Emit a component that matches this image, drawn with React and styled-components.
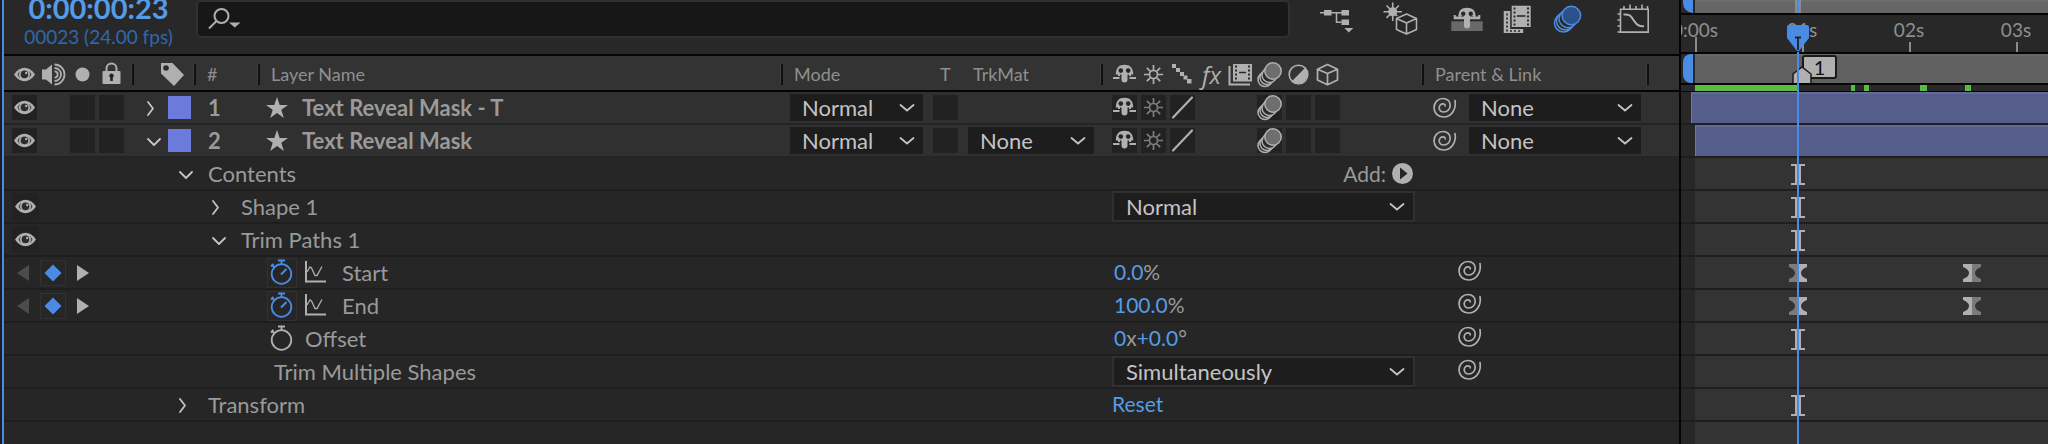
import React from "react";
import styled, { createGlobalStyle, css } from "styled-components";

const c = {
  panel: "#262626",
  toolbar: "#282828",
  header: "#333333",
  layer: "#303030",
  well: "#222222",
  field: "#1d1d1d",
  line: "#1e1e1e",
  icon: "#b0b0b0",
  text: "#9a9a9a",
  bright: "#c4c4c4",
  blue: "#4a8be5",
  value: "#559be8",
  green: "#5cbb44",
};

const ZERO = 14;
const SECOND = 107;
const NOW = 117;

const Global = createGlobalStyle`
  *, *::before, *::after { box-sizing: border-box; }
  body { margin: 0; background: ${c.panel}; font-family: Lato, "Open Sans", sans-serif; color: ${c.text}; overflow: hidden; }
  button, input, select { font: inherit; color: inherit; margin: 0; }
  svg { display: block; flex: none; overflow: visible; }
`;

const Page = styled.main`
  display: grid;
  grid-template-columns: minmax(1300px, 1679px) minmax(300px, 1fr);
  min-height: 100vh;
`;

const LayerPanel = styled.section`
  border-left: 2px solid ${c.blue};
  box-shadow: -2px 0 0 #1c1c1c;
  margin-left: 2px;
  background: ${c.panel};
`;

/* Toolbar */
const Toolbar = styled.div`
  display: flex;
  height: 56px;
  background: ${c.toolbar};
  border-bottom: 2px solid #050505;
`;

const Timecode = styled.div`
  flex: 0 0 189px;
  display: flex;
  flex-direction: column;
  align-items: center;
  gap: 9px;
  white-space: nowrap;
`;

const CurrentTime = styled.button`
  border: 0;
  padding: 0;
  background: none;
  font-size: 29px;
  font-weight: 700;
  line-height: 16px;
  color: ${c.value};
`;

const FrameInfo = styled.span`
  font-size: 19px;
  line-height: 24px;
  color: #2f68ad;
`;

const Search = styled.label`
  flex: 1;
  display: flex;
  align-items: center;
  gap: 8px;
  height: 38px;
  margin-left: 3px;
  padding-left: 10px;
  background: #171717;
  border: 2px solid #303030;
  border-radius: 5px;
`;

const SearchInput = styled.input`
  flex: 1;
  min-width: 0;
  height: 28px;
  border: 0;
  outline: 0;
  background: transparent;
  font-size: 19px;
`;

const ToolGroups = styled.div`
  display: flex;
  gap: 32px;
  padding: 3px 29px 0 28px;
`;

const ToolGroup = styled.div`
  display: flex;
  gap: 16px;
`;

const IconButton = styled.button`
  display: flex;
  align-items: center;
  justify-content: center;
  flex: none;
  width: ${(p) => p.$w || 25}px;
  height: ${(p) => p.$h || p.$w || 25}px;
  padding: 0;
  border: ${(p) => (p.$framed ? "1px solid #313131" : "0")};
  background: ${(p) => (p.$well ? c.well : "transparent")};
`;

/* Column grid shared by the header and the layer rows */
const columns = css`
  display: grid;
  grid-template-columns: 130px 62px 64px minmax(0, 1fr) 320px 321px 225px 30px;
`;

const HeaderRow = styled.div`
  ${columns}
  height: 36px;
  padding-top: 2px;
  background: ${c.header};
  border-bottom: 2px solid #050505;
  font-size: 18px;
  color: #8f8f8f;
`;

const HeaderCell = styled.div`
  display: flex;
  align-items: center;
  gap: ${(p) => p.$gap || 0}px;
  padding-left: ${(p) => p.$pad || 0}px;
  white-space: nowrap;
  &::after {
    content: "";
    width: 2px;
    height: 21px;
    margin-left: auto;
    background: #0f0f0f;
    box-shadow: -1px 0 0 #3d3d3d;
  }
`;

const HeaderLabel = styled.span`
  width: ${(p) => (p.$w ? p.$w + "px" : "auto")};
`;

const LayerRow = styled.div`
  ${columns}
  height: 33px;
  background: ${c.layer};
  border-bottom: 2px solid #242424;
  font-size: 22px;
  font-weight: 700;
`;

const Cell = styled.div`
  display: flex;
  align-items: center;
  gap: ${(p) => p.$gap || 0}px;
  padding-left: ${(p) => p.$pad || 0}px;
  white-space: nowrap;
`;

const Well = styled.span`
  flex: none;
  width: 25px;
  height: 25px;
  background: ${(p) => (p.$empty ? "transparent" : c.well)};
`;

const Swatch = styled.button`
  width: 23px;
  height: 23px;
  padding: 0;
  border: 0;
  background: #6b7adb;
`;

const SelectBox = styled.div`
  display: grid;
  align-items: center;
  justify-items: end;
  width: ${(p) => p.$w}px;
  height: ${(p) => (p.$framed ? 31 : 27)}px;
  background: ${c.field};
  border: ${(p) => (p.$framed ? "2px solid #303030" : "0")};
  color: ${c.bright};
  font-size: 22px;
  font-weight: 400;
  & > * { grid-area: 1 / 1; }
  & > svg { margin-right: 8px; pointer-events: none; }
`;

const NativeSelect = styled.select`
  appearance: none;
  width: 100%;
  height: 27px;
  padding: 0 28px 0 12px;
  border: 0;
  background: transparent;
  line-height: 27px;
`;

/* Property rows */
const PropertyRow = styled.div`
  display: grid;
  grid-template-columns: 130px minmax(0, 1fr) 321px 255px;
  height: 33px;
  border-bottom: 2px solid ${c.line};
  font-size: 22px;
`;

const ValueCell = styled(Cell)`
  padding-bottom: ${(p) => (p.$raised ? 3 : 0)}px;
  font-size: 21px;
`;

const ValueButton = styled.button`
  padding: 0;
  border: 0;
  background: none;
  color: ${c.value};
`;

const AddButton = styled.button`
  display: flex;
  align-items: center;
  gap: 6px;
  margin-left: auto;
  margin-right: 11px;
  padding: 0;
  border: 0;
  background: none;
`;

/* Timeline */
const Timeline = styled.section`
  display: flex;
  flex-direction: column;
  position: relative;
  overflow: hidden;
  border-left: 2px solid #050505;
  background: ${c.toolbar};
`;

const Track = styled.div`
  position: relative;
  height: ${(p) => p.$h}px;
  padding-left: ${ZERO}px;
  border-bottom: ${(p) => p.$line || 2}px solid #050505;
`;

const Bar = styled.div`
  height: 100%;
  background: ${(p) => p.$color};
  box-shadow: inset 0 2px 0 rgba(255, 255, 255, 0.05);
`;

const Handle = styled.span`
  position: absolute;
  top: 0;
  bottom: 0;
  left: 2px;
  width: 10px;
  background: ${c.blue};
  border-radius: ${(p) => (p.$low ? "0 0 0 10px" : "8px 0 0 8px")};
`;

const NavigatorMark = styled.span`
  position: absolute;
  top: 0;
  bottom: 0;
  left: ${NOW - 3}px;
  width: 6px;
  background: ${c.blue};
  border: solid #8b8b8b;
  border-width: 0 2px;
`;

const Tick = styled.span`
  position: absolute;
  bottom: 0;
  width: 2px;
  height: ${(p) => (p.$tall ? 15 : 10)}px;
  background: #8a8a8a;
`;

const TickLabel = styled.span`
  position: absolute;
  top: 5px;
  transform: translateX(-50%);
  font-size: 19px;
  line-height: 20px;
  color: #8f8f8f;
`;

const Cached = styled.span`
  position: absolute;
  top: 0;
  bottom: 0;
  background: ${c.green};
`;

const Marker = styled.div`
  position: absolute;
  top: 1px;
  left: 121px;
  width: 35px;
  height: 24px;
  border: 2px solid #1a1a1a;
  border-radius: 3px;
  background: #b0b0b0;
  color: #111;
  font-size: 20px;
  line-height: 20px;
  text-align: center;
`;

const MarkerPin = styled.svg`
  position: absolute;
  left: 111px;
  bottom: 0;
`;

const TrackRow = styled.div`
  position: relative;
  height: 33px;
  padding-left: ${(p) => (p.$start === undefined ? ZERO : p.$start)}px;
  border-bottom: 2px solid ${c.line};
`;

const LayerBar = styled.div`
  height: 100%;
  background: #555d8b;
  border-top: 2px solid #62699a;
  border-left: 1px solid #6f77a8;
`;

const Lane = styled.div`
  height: 100%;
  background: #333333;
`;

const Filler = styled.div`
  flex: 1;
  display: grid;
  padding-left: ${ZERO}px;
`;

const KeySvg = styled.svg`
  position: absolute;
  top: 6px;
  transform: translateX(-50%);
`;

const PlayheadLine = styled.span`
  position: absolute;
  top: 52px;
  bottom: 0;
  left: ${NOW - 1}px;
  width: 2px;
  background: ${c.blue};
`;

const PlayheadGrip = styled.svg`
  position: absolute;
  top: 25px;
  left: ${NOW - 11}px;
`;

/* Icons */
const Eye = () => (
  <svg width="21" height="15" viewBox="0 0 21 15">
    <path d="M0 7.500C3 3 6.500.7 10.500.7S18 3 21 7.500C18 12 14.500 14.300 10.500 14.300S3 12 0 7.500z" fill={c.icon} />
    <path d="M3.500 7.500C4.300 5.800 5.300 4.600 6.300 4A5.800 5.800 0 0 0 6.300 11C5.300 10.400 4.300 9.200 3.500 7.500zM17.500 7.500C16.700 5.800 15.700 4.600 14.700 4A5.800 5.800 0 0 1 14.700 11C15.700 10.400 16.700 9.200 17.500 7.500z" fill="#4a4a4a" />
    <circle cx="10.500" cy="7.400" r="3.800" fill="#2c2c2c" />
    <circle cx="12.200" cy="6" r="1.200" fill={c.icon} />
  </svg>
);

const Speaker = () => (
  <svg width="25" height="25" viewBox="0 0 25 25" fill="none" stroke={c.icon} strokeWidth="1.800">
    <path d="M1 7.500h4l6-5v20l-6-5H1z" fill={c.icon} stroke="none" />
    <path d="M13.500 9.300a3.200 3.200 0 0 1 0 6.400M13.500 6a6.500 6.500 0 0 1 0 13M13.500 2.500a10 10 0 0 1 0 20" />
  </svg>
);

const Dot = () => (
  <svg width="25" height="25" viewBox="0 0 25 25"><circle cx="12.500" cy="12.500" r="7" fill={c.icon} /></svg>
);

const Lock = () => (
  <svg width="25" height="25" viewBox="0 0 25 25">
    <path d="M7.500 10V6.500a5 5 0 0 1 10 0V10" fill="none" stroke={c.icon} strokeWidth="2" />
    <rect x="3.500" y="9" width="18" height="13" rx="1" fill={c.icon} />
    <path d="M12.500 11.500a2.200 2.200 0 0 1 1.300 4V19h-2.600v-3.500A2.200 2.200 0 0 1 12.500 11.500z" fill="#222" />
  </svg>
);

const Tag = () => (
  <svg width="23" height="23" viewBox="0 0 23 23">
    <path d="M0 0h11.500L23 12 13 23 0 10.500z" fill={c.icon} />
    <circle cx="5" cy="5" r="2.800" fill="#2c2c2c" />
  </svg>
);

const Shy = () => (
  <svg width="25" height="25" viewBox="0 0 25 25" fill={c.icon}>
    <path d="M3.800 12.500C3.800 6 7 2.800 12.500 2.800S21.200 6 21.200 12.500z" />
    <path d="M9.500 12h6v5.500a3 3 0 0 1-6 0zM1 15h6.500v2H1zM17.500 15H24v2h-6.500z" />
    <path d="M6 12h2v2H6zM17 12h2v2h-2z" />
    <circle cx="8.800" cy="8.600" r="2.300" fill="#252525" />
    <circle cx="16.200" cy="8.600" r="2.300" fill="#252525" />
  </svg>
);

const Sun = ({ dim }) => (
  <svg width="25" height="25" viewBox="0 0 25 25" fill="none" stroke={dim ? "#7c7c7c" : c.icon} strokeWidth="1.700">
    <circle cx="12.500" cy="12.500" r="4" />
    <path d="M12.500 3v5M12.500 17v5M3 12.500h5M17 12.500h5M5.800 5.800l3.400 3.400M15.800 15.800l3.400 3.400M19.200 5.800l-3.400 3.400M9.200 15.800l-3.400 3.400" />
  </svg>
);

const Stairs = () => (
  <svg width="25" height="25" viewBox="0 0 25 25" fill={c.icon}>
    <path d="M2 2h4v4H2zM6 6h4v4H6zM10 10h4v4h-4zM13.500 13.500h4v4h-4zM17 17h4.500v4.500H17z" />
  </svg>
);

const Slash = () => (
  <svg width="25" height="25" viewBox="0 0 25 25" fill="none" stroke={c.icon} strokeWidth="2.200" strokeLinecap="round">
    <path d="M3 22.500L22 2.500" />
  </svg>
);

const FxMark = styled.span`
  width: 25px;
  font-family: "Open Sans", sans-serif;
  font-style: italic;
  font-size: 24px;
  line-height: 25px;
  text-align: center;
  color: ${c.icon};
`;

const FrameBlend = () => (
  <svg width="25" height="25" viewBox="0 0 25 25">
    <path d="M1.500 4v18.500H22" fill="none" stroke={c.icon} strokeWidth="2" />
    <rect x="5" y="2" width="19" height="17.500" fill={c.icon} />
    <path d="M8 3.500v15M21 3.500v15" stroke="#2a2a2a" strokeWidth="2" strokeDasharray="2 2" />
    <path d="M11 10.500h7" stroke="#2a2a2a" strokeWidth="1.500" />
  </svg>
);

const MotionBlur = () => (
  <svg width="25" height="25" viewBox="0 0 25 25" stroke={c.icon} strokeWidth="1.500" fill="#2b2b2b">
    <circle cx="8" cy="17.500" r="7" />
    <circle cx="10" cy="15.500" r="7" />
    <circle cx="12.500" cy="13" r="7.500" />
    <circle cx="16" cy="9" r="8.200" fill="#6e6e6e" />
  </svg>
);

const Adjust = () => (
  <svg width="25" height="25" viewBox="0 0 25 25">
    <circle cx="12.500" cy="12.500" r="9.300" fill="none" stroke={c.icon} strokeWidth="1.600" />
    <path d="M19.200 5.800A9.500 9.500 0 0 1 5.800 19.200z" fill={c.icon} />
  </svg>
);

const Cube = () => (
  <svg width="25" height="25" viewBox="0 0 25 25" fill="none" stroke={c.icon} strokeWidth="1.700" strokeLinejoin="round">
    <path d="M12.500 2.500l10 4.700v10.800l-10 4.800-10-4.800V7.200zM2.500 7.200l10 4.300 10-4.300M12.500 11.500v11.300" />
  </svg>
);

const Spiral = () => (
  <svg width="24" height="22" viewBox="0 0 24 22" fill="none" stroke={c.icon} strokeWidth="1.700" strokeLinecap="round">
    <path d="M22 3.500C23.500 12 18.500 20 10.500 20 5 20 1 15.800 1 10.800 1 5.500 5 1.500 10 1.500c4.300 0 7.200 3 7.200 6.700 0 3.800-2.700 6.800-6.400 6.800-2.700 0-4.600-1.800-4.600-4.200 0-2.200 1.600-4 3.700-4 1.500 0 2.400.9 2.300 2.100" />
  </svg>
);

const Star = () => (
  <svg width="22" height="22" viewBox="0 0 22 22" fill={c.icon}>
    <path d="M11 0l2.700 8H22l-6.700 4.800L17.800 21 11 16l-6.800 5 2.500-8.200L0 8h8.300z" />
  </svg>
);

const Chevron = ({ open }) => (
  <svg width="16" height="16" viewBox="0 0 16 16" fill="none" stroke={c.bright} strokeWidth="1.800" strokeLinecap="round" strokeLinejoin="round">
    <path d={open ? "M2 6l6 6 6-6" : "M2 2l5 6.500L2 15"} />
  </svg>
);

const DownMark = () => (
  <svg width="16" height="8" viewBox="0 0 16 8" fill="none" stroke={c.bright} strokeWidth="1.800" strokeLinecap="round">
    <path d="M1.500 1L8 6.500 14.500 1" />
  </svg>
);

const Stopwatch = ({ on }) => (
  <svg width="24" height="28" viewBox="0 0 24 28" fill="none" stroke={on ? c.blue : c.icon} strokeWidth="1.800">
    <circle cx="11.500" cy="15" r="9.800" />
    <path d="M8 1.500h7M11.500 1.500V5M1.500 5.500l3 3M1 7.500l2.500-2.500" />
    {on && <path d="M11 15.500l5.500-5.500" strokeWidth="2" />}
  </svg>
);

const GraphSmall = () => (
  <svg width="22" height="24" viewBox="0 0 22 24" fill="none" stroke={c.icon}>
    <path d="M1 0v20.500h20" strokeWidth="2" />
    <path d="M2 11l3-5 1.500 1 3.500 7.500h2l5-9" strokeWidth="1.300" />
  </svg>
);

const KeyArrow = ({ back }) => (
  <svg width="12" height="16" viewBox="0 0 12 16">
    <path d={back ? "M12 0v16L0 8z" : "M0 0v16l12-8z"} fill={back ? "#4c4c4c" : c.icon} />
  </svg>
);

const Diamond = () => (
  <svg width="18" height="18" viewBox="0 0 18 18"><path d="M9 .5L17.500 9 9 17.500.5 9z" fill={c.blue} /></svg>
);

const AddMark = () => (
  <svg width="21" height="21" viewBox="0 0 21 21">
    <circle cx="10.500" cy="10.500" r="10.500" fill={c.icon} />
    <path d="M8 4.500v12l7.500-6z" fill="#262626" />
  </svg>
);

const Magnifier = () => (
  <svg width="34" height="22" viewBox="0 0 34 22" fill="none" stroke={c.icon} strokeWidth="2">
    <circle cx="13.500" cy="8" r="7" />
    <path d="M8.500 13L1 20.500" />
    <path d="M21 14.500h11.500L26.800 19.500z" fill={c.icon} stroke="none" />
  </svg>
);

const Tool = ({ children }) => (
  <svg width="34" height="34" viewBox="0 0 34 34" fill={c.icon}>{children}</svg>
);

const FlowIcon = () => (
  <Tool>
    <path d="M6 7h7.500v5.500H6zM23.500 7H31v5.500h-7.500zM23.500 16.500H31V22h-7.500zM26.300 25h9l-4.500 4.500z" />
    <path d="M2 9.700h22M18.500 9.700v9.600h5" fill="none" stroke={c.icon} strokeWidth="1.500" />
  </Tool>
);

const DraftIcon = () => (
  <Tool>
    <circle cx="8.700" cy="8.700" r="4.500" />
    <g fill="none" stroke={c.icon} strokeWidth="1.600" strokeLinejoin="round">
      <path d="M8.700-.5v18.400M-.5 8.700h18.400M2.500 2.500l12.400 12.400M14.900 2.500L2.500 14.900" />
      <path d="M22.500 11l10 4.500v11l-10 4.500-10-4.500v-11z" fill={c.toolbar} stroke={c.toolbar} strokeWidth="4" />
      <path d="M22.500 11l10 4.500v11l-10 4.500-10-4.500v-11zM12.500 15.500l10 4.500 10-4.500M22.500 20v11" />
    </g>
  </Tool>
);

const ShyToolIcon = () => (
  <Tool>
    <path d="M1.300 18.300h31.400V28H1.300z" fill="#696969" />
    <path d="M8.500 13C8.500 7.500 11.500 4.700 17 4.700S25.500 7.500 25.500 13z" />
    <path d="M3.700 12h2v1.500h3V12h2v1.500h12.600V12h2v1.500h3V12h2v4.300H3.700z" />
    <path d="M14 13h6v9.500a3 3 0 0 1-6 0z" />
    <circle cx="13.200" cy="10.800" r="2.200" fill={c.toolbar} />
    <circle cx="20.800" cy="10.800" r="2.200" fill={c.toolbar} />
  </Tool>
);

const FilmIcon = () => (
  <Tool>
    <path d="M3.700 8h6.500v18h13v4H3.700z" />
    <path d="M7 10.500v18M10 28h12" stroke={c.toolbar} strokeWidth="1.700" strokeDasharray="2 2" />
    <path d="M11.700 2.700h19V24h-19z" />
    <path d="M14.500 4.500v18.500M28 4.500v18.500" stroke={c.toolbar} strokeWidth="2" strokeDasharray="2 2" />
    <path d="M17 13h8.500" stroke={c.toolbar} strokeWidth="1.600" />
  </Tool>
);

const BlurToolIcon = () => (
  <Tool>
    <g stroke={c.blue} strokeWidth="1.500" fill={c.toolbar}>
      <circle cx="13.500" cy="20" r="9" />
      <circle cx="15.500" cy="18" r="9" />
      <circle cx="18" cy="15.700" r="9" />
      <circle cx="21.300" cy="12.500" r="9.300" fill="#2c5189" />
    </g>
  </Tool>
);

const GraphEditorIcon = () => (
  <Tool>
    <g fill="none" stroke={c.icon} strokeWidth="1.600">
      <path d="M4.500 6.300h27.700v22.800H4.500zM8 6V3M14 6V1.500M20 6V3M26 6V1.500M31.500 6V3M4 11H1.500M4 17H1.500M4 23H1.500M4 29H1.500" />
      <path d="M7.500 11.500c7-.5 7.500 2 10 5.500s4 6.500 10.500 6.300" strokeWidth="2" />
    </g>
  </Tool>
);

const HoldMark = ({ x }) => (
  <KeySvg style={{ left: x }} width="14" height="21" viewBox="0 0 14 21" fill={c.icon}>
    <path d="M0 0h14v2h-4v17h4v2H0v-2h4V2H0z" />
  </KeySvg>
);

const EaseKey = ({ x, flip }) => (
  <KeySvg style={{ left: x }} width="18" height="20" viewBox="0 0 18 20">
    <path d="M0 1h9v18H0v-3c4-1.500 6-3.500 6-6S4 5.500 0 4z" fill={flip ? c.icon : "#7b7b7b"} />
    <path d="M18 1H9v18h9v-3c-4-1.500-6-3.500-6-6s2-4.500 6-6z" fill={flip ? "#7b7b7b" : c.icon} />
  </KeySvg>
);

function Select({ label, value, width, framed }) {
  return (
    <SelectBox $w={width} $framed={framed}>
      <NativeSelect aria-label={label} defaultValue={value}>
        <option>{value}</option>
      </NativeSelect>
      <DownMark />
    </SelectBox>
  );
}

const layers = [
  { id: 1, name: "Text Reveal Mask - T", open: false, matte: null, start: 10 },
  { id: 2, name: "Text Reveal Mask", open: true, matte: "None", start: ZERO },
];

function Layer({ layer }) {
  return (
    <LayerRow>
      <Cell $pad={8} $gap={4}>
        <IconButton $well aria-label="Toggle visibility"><Eye /></IconButton>
        <Well $empty />
        <Well />
        <Well />
      </Cell>
      <Cell $pad={12} $gap={6}>
        <IconButton $w={16} aria-label="Expand layer"><Chevron open={layer.open} /></IconButton>
        <Swatch aria-label="Label colour" />
      </Cell>
      <Cell $pad={12}>{layer.id}</Cell>
      <Cell $pad={6} $gap={14}><Star />{layer.name}</Cell>
      <Cell $pad={7} $gap={10}>
        <Select label="Mode" value="Normal" width={133} />
        <Well />
        {layer.matte && <Select label="Track matte" value={layer.matte} width={126} />}
      </Cell>
      <Cell $pad={9} $gap={4}>
        <IconButton $well aria-label="Shy"><Shy /></IconButton>
        <IconButton $well aria-label="Collapse transformations"><Sun dim /></IconButton>
        <IconButton $well aria-label="Quality"><Slash /></IconButton>
        <Well $empty />
        <Well $empty />
        <IconButton $well aria-label="Motion blur"><MotionBlur /></IconButton>
        <Well />
        <Well />
      </Cell>
      <Cell $pad={9} $gap={12}>
        <IconButton $w={24} aria-label="Parent pick whip"><Spiral /></IconButton>
        <Select label="Parent" value="None" width={172} />
      </Cell>
    </LayerRow>
  );
}

function Property({ left, indent, gap, name, children, raised, pad = 9, link }) {
  return (
    <PropertyRow>
      {left || <span />}
      <Cell $pad={indent} $gap={gap}>{name}</Cell>
      <ValueCell $pad={pad} $raised={raised}>{children}</ValueCell>
      <ValueCell $pad={34} $raised>
        {link && <IconButton $w={24} aria-label="Property pick whip"><Spiral /></IconButton>}
      </ValueCell>
    </PropertyRow>
  );
}

const EyeCell = () => (
  <Cell $pad={8}><IconButton $w={27} $well aria-label="Toggle visibility"><Eye /></IconButton></Cell>
);

const KeyNav = () => (
  <Cell $pad={13} $gap={11}>
    <IconButton $w={12} $h={20} aria-label="Previous keyframe"><KeyArrow back /></IconButton>
    <IconButton $w={26} $framed aria-label="Toggle keyframe"><Diamond /></IconButton>
    <IconButton $w={12} $h={20} aria-label="Next keyframe"><KeyArrow /></IconButton>
  </Cell>
);

const Expander = ({ open }) => (
  <IconButton $w={16} aria-label="Expand group"><Chevron open={open} /></IconButton>
);

const Watch = ({ on }) => (
  <IconButton $w={30} $framed={on} aria-label="Toggle animation"><Stopwatch on={on} /></IconButton>
);

const AnimatedName = ({ children }) => (
  <>
    <Watch on />
    <Cell $gap={15}><GraphSmall />{children}</Cell>
  </>
);

const hold = <HoldMark x={NOW} />;
const keys = <><EaseKey x={NOW} /><EaseKey x={291} flip /></>;
const lanes = [hold, hold, hold, keys, keys, hold, null, hold];
const cached = [[ZERO, 103], [170, 4], [183, 5], [239, 7], [284, 6]];

export default function App() {
  return (
    <>
      <Global />
      <Page>
        <LayerPanel>
          <Toolbar>
            <Timecode>
              <CurrentTime>0:00:00:23</CurrentTime>
              <FrameInfo>00023 (24.00 fps)</FrameInfo>
            </Timecode>
            <Search>
              <Magnifier />
              <SearchInput type="text" aria-label="Search layers" />
            </Search>
            <ToolGroups>
              <IconButton $w={34} aria-label="Mini flowchart"><FlowIcon /></IconButton>
              <IconButton $w={34} aria-label="Draft 3D"><DraftIcon /></IconButton>
              <ToolGroup>
                <IconButton $w={34} aria-label="Hide shy layers"><ShyToolIcon /></IconButton>
                <IconButton $w={34} aria-label="Frame blending"><FilmIcon /></IconButton>
                <IconButton $w={34} aria-label="Motion blur"><BlurToolIcon /></IconButton>
              </ToolGroup>
              <IconButton $w={34} aria-label="Graph editor"><GraphEditorIcon /></IconButton>
            </ToolGroups>
          </Toolbar>

          <HeaderRow>
            <HeaderCell $pad={8} $gap={4}>
              <IconButton as="span"><Eye /></IconButton>
              <Speaker />
              <Dot />
              <Lock />
            </HeaderCell>
            <HeaderCell $pad={27}><Tag /></HeaderCell>
            <HeaderCell $pad={11}>#</HeaderCell>
            <HeaderCell $pad={11}>Layer Name</HeaderCell>
            <HeaderCell $pad={11}>
              <HeaderLabel $w={146}>Mode</HeaderLabel>
              <HeaderLabel $w={33}>T</HeaderLabel>
              <HeaderLabel>TrkMat</HeaderLabel>
            </HeaderCell>
            <HeaderCell $pad={9} $gap={4}>
              <Shy />
              <Sun />
              <Stairs />
              <FxMark>fx</FxMark>
              <FrameBlend />
              <MotionBlur />
              <Adjust />
              <Cube />
            </HeaderCell>
            <HeaderCell $pad={11}>Parent &amp; Link</HeaderCell>
          </HeaderRow>

          {layers.map((l) => <Layer key={l.id} layer={l} />)}

          <Property indent={44} gap={14} name={<><Expander open />Contents</>}>
            <AddButton>Add:<AddMark /></AddButton>
          </Property>
          <Property left={<EyeCell />} indent={77} gap={14} name={<><Expander />Shape 1</>}>
            <Select label="Shape mode" value="Normal" width={303} framed />
          </Property>
          <Property left={<EyeCell />} indent={77} gap={14} name={<><Expander open />Trim Paths 1</>} />
          <Property left={<KeyNav />} indent={133} gap={8} name={<AnimatedName>Start</AnimatedName>} pad={11} raised link>
            <ValueButton>0.0</ValueButton>%
          </Property>
          <Property left={<KeyNav />} indent={133} gap={8} name={<AnimatedName>End</AnimatedName>} pad={11} raised link>
            <ValueButton>100.0</ValueButton>%
          </Property>
          <Property indent={133} gap={8} name={<><Watch />Offset</>} pad={11} raised link>
            <ValueButton>0</ValueButton>x<ValueButton>+0.0</ValueButton>°
          </Property>
          <Property indent={140} name="Trim Multiple Shapes" link>
            <Select label="Trim multiple shapes" value="Simultaneously" width={303} framed />
          </Property>
          <Property indent={44} gap={14} name={<><Expander />Transform</>} raised>
            <ValueButton>Reset</ValueButton>
          </Property>
        </LayerPanel>

        <Timeline>
          <Track $h={15}>
            <Bar $color="#666666" />
            <Handle $low />
            <NavigatorMark />
          </Track>
          <Track $h={39}>
            {["0:00s", "01s", "02s", "03s"].map((t, i) => (
              <React.Fragment key={t}>
                <TickLabel style={{ left: ZERO + i * SECOND }}>{t}</TickLabel>
                <Tick $tall={i === 0} style={{ left: ZERO + i * SECOND }} />
              </React.Fragment>
            ))}
          </Track>
          <Track $h={31}>
            <Bar $color="#606060" />
            <Handle />
            <Marker>1</Marker>
            <MarkerPin width="20" height="17" viewBox="0 0 20 17">
              <path d="M1 17V8l9-7 9 7v9" fill="#b0b0b0" stroke="#1a1a1a" strokeWidth="1.500" />
            </MarkerPin>
          </Track>
          <Track $h={7} $line={1}>
            {cached.map(([left, width]) => <Cached key={left} style={{ left, width }} />)}
          </Track>
          {layers.map((l) => (
            <TrackRow key={l.id} $start={l.start}><LayerBar /></TrackRow>
          ))}
          {lanes.map((mark, i) => (
            <TrackRow key={i}><Lane />{mark}</TrackRow>
          ))}
          <Filler><Lane /></Filler>
          <PlayheadLine />
          <PlayheadGrip width="22" height="27" viewBox="0 0 22 27">
            <path d="M2 0h18a2 2 0 0 1 2 2v11L12 26h-2L0 13V2a2 2 0 0 1 2-2z" fill={c.blue} />
            <path d="M8 12.500h6M11 12.500V25" stroke="#222" strokeWidth="1.800" />
          </PlayheadGrip>
        </Timeline>
      </Page>
    </>
  );
}
